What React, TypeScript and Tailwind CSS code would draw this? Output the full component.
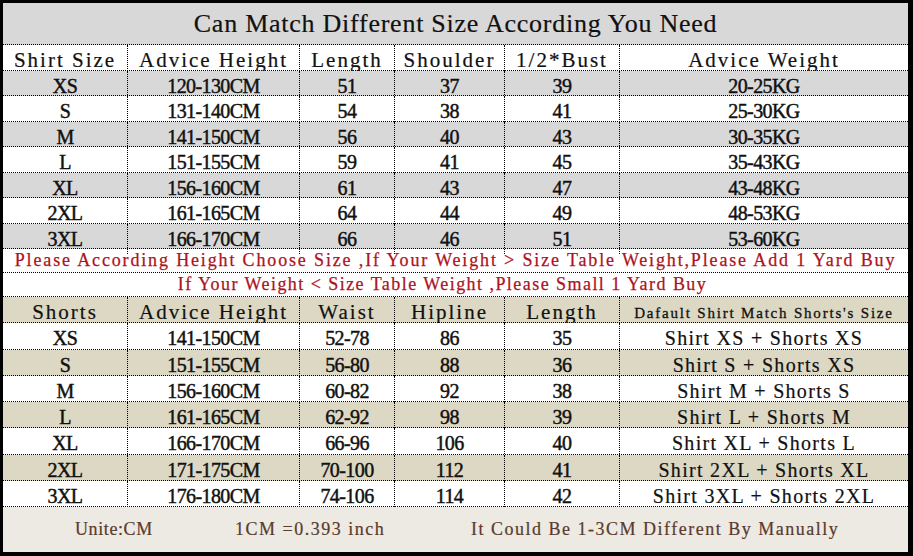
import React from 'react';

const cols = 'grid grid-cols-[125px_172px_95px_110px_115px_1fr]';
const serif = "font-['Liberation_Serif','Times_New_Roman',serif]";

const shirtRows = [
  ['XS', '120-130CM', '51', '37', '39', '20-25KG'],
  ['S', '131-140CM', '54', '38', '41', '25-30KG'],
  ['M', '141-150CM', '56', '40', '43', '30-35KG'],
  ['L', '151-155CM', '59', '41', '45', '35-43KG'],
  ['XL', '156-160CM', '61', '43', '47', '43-48KG'],
  ['2XL', '161-165CM', '64', '44', '49', '48-53KG'],
  ['3XL', '166-170CM', '66', '46', '51', '53-60KG'],
];

const shortsRows = [
  ['XS', '141-150CM', '52-78', '86', '35', 'Shirt XS + Shorts XS'],
  ['S', '151-155CM', '56-80', '88', '36', 'Shirt S + Shorts XS'],
  ['M', '156-160CM', '60-82', '92', '38', 'Shirt M + Shorts S'],
  ['L', '161-165CM', '62-92', '98', '39', 'Shirt L + Shorts M'],
  ['XL', '166-170CM', '66-96', '106', '40', 'Shirt XL + Shorts L'],
  ['2XL', '171-175CM', '70-100', '112', '41', 'Shirt 2XL + Shorts XL'],
  ['3XL', '176-180CM', '74-106', '114', '42', 'Shirt 3XL + Shorts 2XL'],
];

const Row = ({
  cells,
  bg,
  height,
  cellClass,
  lastClass,
}: {
  cells: string[];
  bg: string;
  height: string;
  cellClass: string;
  lastClass?: string;
}) => (
  <div className={`${cols} ${bg} ${height} border-b border-dotted border-black`}>
    {cells.map((c, i) => (
      <div
        key={i}
        className={`flex items-center justify-center whitespace-nowrap text-[#111] ${
          i < cells.length - 1 ? 'border-r border-dotted border-black' : ''
        } ${i === cells.length - 1 && lastClass ? lastClass : cellClass}`}
      >
        {c}
      </div>
    ))}
  </div>
);

const SizeChart = () => {
  const head = `${serif} text-[21px] tracking-[2px] [-webkit-text-stroke:0.2px_#111]`;
  const num = `${serif} text-[20px] tracking-[-0.6px] [-webkit-text-stroke:0.45px_#111]`;

  return (
    <div className="w-[913px] h-[556px] bg-black pt-[3px] pl-[3px] pr-[5px] pb-[4px]">
      <div className="flex flex-col bg-white h-full">
        {/* title */}
        <div
          className={`h-[42px] bg-[#d8d8d8] border-b border-dotted border-black flex items-center justify-center ${serif} text-[26px] tracking-[0.75px] text-[#111] [-webkit-text-stroke:0.2px_#111]`}
        >
          Can Match Different Size According You Need
        </div>

        {/* shirt table */}
        <Row
          cells={['Shirt Size', 'Advice Height', 'Length', 'Shoulder', '1/2*Bust', 'Advice Weight']}
          bg="bg-white"
          height="h-[25.5px]"
          cellClass={head}
        />
        {shirtRows.map((r, i) => (
          <Row
            key={r[0]}
            cells={r}
            bg={i % 2 === 0 ? 'bg-[#d8d8d8]' : 'bg-white'}
            height="h-[25.5px]"
            cellClass={num}
          />
        ))}

        {/* notes */}
        <div
          className={`h-[24px] border-b border-dotted border-black flex items-center justify-center whitespace-nowrap ${serif} text-[18px] tracking-[1.85px] text-[#ad121c] [-webkit-text-stroke:0.25px_#ad121c]`}
        >
          Please According Height Choose Size ,If Your Weight &gt; Size Table Weight,Please Add 1 Yard Buy
        </div>
        <div
          className={`h-[24px] border-b border-dotted border-black flex items-center justify-center whitespace-nowrap pr-[26px] ${serif} text-[18px] tracking-[1.45px] text-[#ad121c] [-webkit-text-stroke:0.25px_#ad121c]`}
        >
          If Your Weight &lt; Size Table Weight ,Please Small 1 Yard Buy
        </div>

        {/* shorts table */}
        <Row
          cells={['Shorts', 'Advice Height', 'Waist', 'Hipline', 'Length', "Dafault Shirt Match Shorts's Size"]}
          bg="bg-[#dcd8c3]"
          height="h-[26.25px]"
          cellClass={head}
          lastClass={`${serif} text-[15px] tracking-[1.8px] [-webkit-text-stroke:0.3px_#111]`}
        />
        {shortsRows.map((r, i) => (
          <Row
            key={r[0]}
            cells={r}
            bg={i % 2 === 1 ? 'bg-[#dcd8c3]' : 'bg-white'}
            height="h-[26.25px]"
            cellClass={num}
            lastClass={`${serif} text-[20px] tracking-[1.3px] [-webkit-text-stroke:0.2px_#111]`}
          />
        ))}

        {/* footer */}
        <div
          className={`flex-1 bg-[#eceae2] flex items-center whitespace-nowrap ${serif} text-[18px] tracking-[1.5px] text-[#5a3a2c] [-webkit-text-stroke:0.2px_#5a3a2c]`}
        >
          <span className="ml-[72px] w-[160px] tracking-[0.6px]">Unite:CM</span>
          <span className="w-[236px]">1CM =0.393 inch</span>
          <span>It Could Be 1-3CM Different By Manually</span>
        </div>
      </div>
    </div>
  );
};

export default function App() {
  return <SizeChart />;
}
